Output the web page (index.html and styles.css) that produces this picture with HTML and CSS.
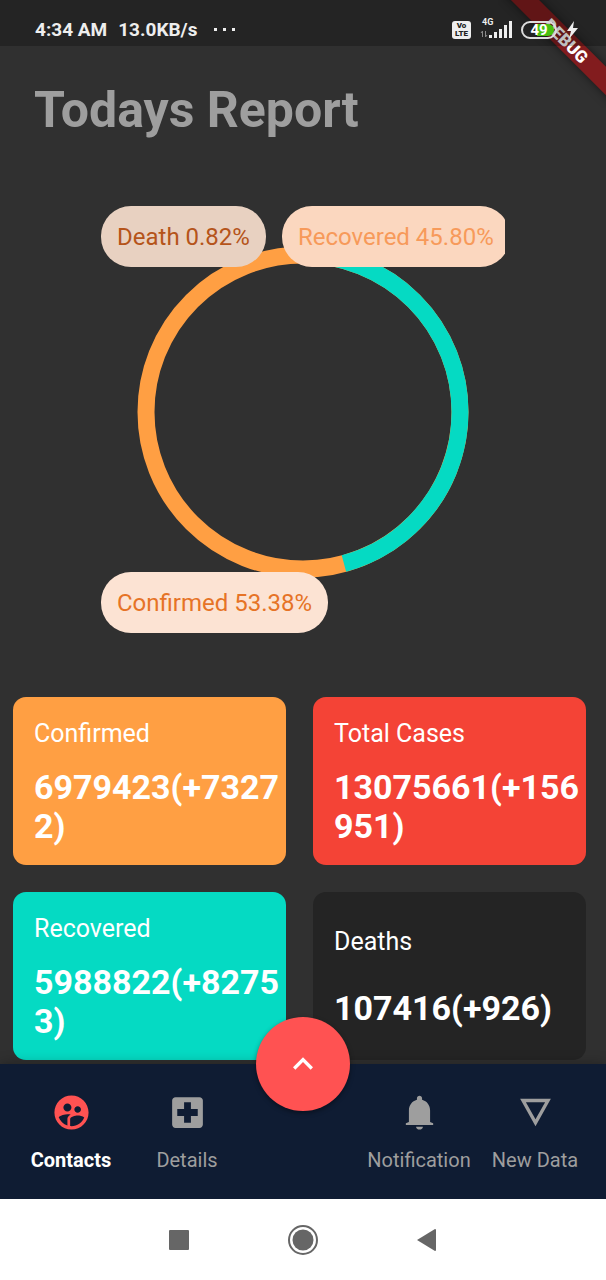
FILE: index.html
```html
<!DOCTYPE html>
<html lang="en">
<head>
<meta charset="utf-8">
<meta name="viewport" content="width=device-width, initial-scale=1">
<title>Todays Report</title>
<link rel="stylesheet" href="styles.css">
</head>
<body>
<div class="ribbon-corner"><span class="ribbon">DEBUG</span></div>

<header class="status">
  <span>4:34 AM</span>
  <span>13.0KB/s</span>
  <svg class="dots" width="22" height="4" viewBox="0 0 22 4" aria-hidden="true"><path fill="currentColor" d="M0 0h3v3H0zM9 0h3v3H9zM18 0h3v3h-3z"/></svg>
  <div class="status-icons">
    <span class="volte"><span>Vo</span><span>LTE</span></span>
    <span class="signal">
      <span class="network">4G</span>
      <svg width="32" height="17" viewBox="0 0 32 17" aria-hidden="true"><path stroke="#888" stroke-width="1" fill="none" d="M2.500 16V10M1 12l1.500-2M5.500 10v6M7 14l-1.500 2"/><path fill="#eee" d="M9 14h3v3H9zM14 11h3v6h-3zM19 8h3v9h-3zM24 4h3v13h-3zM29 0h3v17h-3z"/></svg>
    </span>
    <span class="battery"><span class="battery-level">49</span></span>
    <svg width="13" height="18" viewBox="0 0 13 18" aria-hidden="true"><path fill="#eee" d="M8 0 1 10h4l-2 8 9-11H7z"/></svg>
  </div>
</header>

<main class="content">
  <h1 class="title">Todays Report</h1>

  <section class="chart" aria-label="Share of cases">
    <svg class="ring" viewBox="0 0 332 332" aria-hidden="true">
      <g fill="none" stroke-width="17" transform="rotate(-90 166 166)">
        <circle cx="166" cy="166" r="157" pathLength="100" stroke="#ff9f43"/>
        <circle cx="166" cy="166" r="157" pathLength="100" stroke="#05dac3" stroke-dasharray="45.8 54.2"/>
      </g>
    </svg>
    <div class="legend">
      <div class="legend-row">
        <span class="pill pill-death">Death 0.82%</span>
        <span class="pill pill-recovered">Recovered 45.80%</span>
      </div>
      <div class="legend-row">
        <span class="pill pill-confirmed">Confirmed 53.38%</span>
      </div>
    </div>
  </section>

  <section class="cards" aria-label="Totals">
    <article class="card card-confirmed"><h2 class="card-label">Confirmed</h2><p class="card-value">6979423(+73272)</p></article>
    <article class="card card-total"><h2 class="card-label">Total Cases</h2><p class="card-value">13075661(+156951)</p></article>
    <article class="card card-recovered"><h2 class="card-label">Recovered</h2><p class="card-value">5988822(+82753)</p></article>
    <article class="card card-deaths"><h2 class="card-label">Deaths</h2><p class="card-value">107416(+926)</p></article>
  </section>
</main>

<nav class="tabs" aria-label="Main">
  <button class="tab tab-active" type="button">
    <svg class="tab-icon" viewBox="0 0 24 24" aria-hidden="true"><path fill="currentColor" d="M12 2C6.480 2 2 6.480 2 12s4.480 10 10 10 10-4.480 10-10S17.520 2 12 2zm3.610 6.340c1.070 0 1.930.86 1.930 1.930s-.86 1.930-1.930 1.930-1.930-.86-1.930-1.930c-.01-1.070.86-1.930 1.930-1.930zm-6-1.580c1.300 0 2.360 1.060 2.360 2.360s-1.060 2.360-2.360 2.360-2.360-1.060-2.360-2.360c0-1.310 1.050-2.360 2.360-2.360zm0 9.130v3.750c-2.400-.75-4.300-2.600-5.140-4.960 1.050-1.120 3.670-1.690 5.140-1.690.53 0 1.200.08 1.900.22-1.640.87-1.900 2.020-1.900 2.680zM12 20c-.27 0-.53-.01-.79-.04v-4.070c0-1.420 2.940-2.130 4.400-2.130 1.070 0 2.920.39 3.840 1.150C18.280 17.880 15.390 20 12 20z"/></svg>
    <span>Contacts</span>
  </button>
  <button class="tab" type="button">
    <svg class="tab-icon" viewBox="0 0 24 24" aria-hidden="true"><path fill="currentColor" d="M19 3H5c-1.100 0-1.990.9-1.990 2L3 19c0 1.100.9 2 2 2h14c1.100 0 2-.9 2-2V5c0-1.100-.9-2-2-2zm-1 11h-4v4h-4v-4H6v-4h4V6h4v4h4v4z"/></svg>
    <span>Details</span>
  </button>
  <div class="fab-slot">
    <button class="fab" type="button" aria-label="Expand">
      <svg width="40" height="40" viewBox="0 0 24 24" aria-hidden="true"><path fill="#fff" d="M12 8l-6 6 1.410 1.410L12 10.830l4.590 4.580L18 14z"/></svg>
    </button>
  </div>
  <button class="tab" type="button">
    <svg class="tab-icon" viewBox="0 0 24 24" aria-hidden="true"><path fill="currentColor" d="M12 22c1.100 0 2-.7 2-1.700h-4c0 1 .9 1.700 2 1.700zM18.200 17.500V10.800c0-3.100-1.800-5.500-4.700-6.300v-.8c0-.9-.7-1.500-1.500-1.500s-1.500.6-1.500 1.500v.8c-2.900.8-4.700 3.200-4.700 6.300v6.700L4 18.300v1h16v-1z"/></svg>
    <span>Notification</span>
  </button>
  <button class="tab" type="button">
    <svg class="tab-icon" viewBox="0 0 24 24" aria-hidden="true"><path fill="currentColor" d="M3 4l9 16 9-16H3zm3.380 2h11.250L12 16 6.380 6z"/></svg>
    <span>New Data</span>
  </button>
</nav>

<footer class="system">
  <button class="system-key" type="button" aria-label="Recent apps"><svg width="20" height="20" viewBox="0 0 20 20"><rect width="20" height="20" rx="1" fill="#666"/></svg></button>
  <button class="system-key" type="button" aria-label="Home"><svg width="30" height="30" viewBox="0 0 30 30"><circle cx="15" cy="15" r="14" fill="none" stroke="#666" stroke-width="2"/><circle cx="15" cy="15" r="10.500" fill="#666"/></svg></button>
  <button class="system-key" type="button" aria-label="Back"><svg width="20" height="22" viewBox="0 0 20 22"><path d="M0 11 18 0Q19 0 19 1V21Q19 22 18 22z" fill="#666"/></svg></button>
</footer>
</body>
</html>
```

FILE: styles.css
```css
* {
  box-sizing: border-box;
}

body {
  position: relative;
  display: flex;
  flex-direction: column;
  min-height: 100vh;
  margin: 0;
  overflow-x: hidden;
  background: #303030;
  color: #fff;
  font-family: Roboto, "Liberation Sans", sans-serif;
}

h1,
h2,
p {
  margin: 0;
}

button {
  padding: 0;
  border: 0;
  background: none;
  color: inherit;
  font: inherit;
}

svg {
  display: block;
}

/* Debug ribbon */
.ribbon-corner {
  position: absolute;
  top: 0;
  right: 0;
  width: 108px;
  height: 108px;
  overflow: hidden;
}

.ribbon {
  position: absolute;
  top: 31px;
  left: -12px;
  width: 160px;
  transform: rotate(45deg);
  background: #821c1e;
  box-shadow: 0 0 10px rgba(0, 0, 0, 0.5);
  font-size: 17px;
  font-weight: 900;
  line-height: 20px;
  text-align: center;
}

/* Status bar */
.status {
  position: relative;
  display: flex;
  align-items: center;
  gap: 11px;
  height: 46px;
  padding: 13px 27px 0 35px;
  background: rgba(0, 0, 0, 0.25);
  color: #eee;
  font-size: 19px;
  font-weight: 700;
}

.dots {
  margin-left: 6px;
}

.status-icons {
  display: flex;
  align-items: center;
  gap: 9px;
  margin-left: auto;
}

.volte {
  display: flex;
  flex-direction: column;
  align-items: center;
  width: 19px;
  padding: 1px 0;
  border-radius: 3px;
  background: #eee;
  color: #222;
  font-size: 8px;
  font-weight: 900;
  line-height: 8px;
}

.signal {
  display: grid;
}

.signal > * {
  grid-area: 1 / 1;
}

.network {
  align-self: start;
  margin-top: -3px;
  padding-left: 2px;
  font-size: 9px;
  line-height: 8px;
}

.battery {
  width: 36px;
  padding: 1px;
  border: 2px solid #ddd;
  border-radius: 9px;
}

.battery-level {
  display: block;
  border-radius: 6px;
  background: linear-gradient(90deg, transparent 45%, #48c010 45%);
  color: #fff;
  font-size: 15px;
  line-height: 12px;
  text-align: center;
}

/* Report */
.content {
  flex: 1;
  padding-bottom: 3px;
}

.title {
  padding: 35px 34px 66px;
  color: #9e9e9e;
  font-size: 50px;
  font-weight: 700;
  line-height: 59px;
}

.chart {
  display: grid;
  justify-items: center;
  width: 404px;
  max-width: 100%;
  margin: 0 auto 64px;
}

.chart > * {
  grid-area: 1 / 1;
}

.ring {
  width: 332px;
  margin-top: 40px;
}

.legend {
  position: relative;
  display: flex;
  flex-direction: column;
  justify-content: space-between;
  width: 100%;
  height: 427px;
  overflow: hidden;
}

.legend-row {
  display: flex;
  gap: 16px;
}

.pill {
  flex: none;
  padding: 17px 16px 16px;
  border-radius: 30px;
  font-size: 24px;
  line-height: 28px;
  white-space: nowrap;
}

.pill-death {
  background: #e8d1c1;
  color: #b5541a;
}

.pill-recovered {
  background: #fbd7bf;
  color: #f79a5a;
}

.pill-confirmed {
  background: #fce3d3;
  color: #e67326;
}

/* Totals */
.cards {
  display: grid;
  grid-template-columns: 1fr 1fr;
  gap: 27px;
  padding: 0 20px 0 13px;
}

.card {
  display: flex;
  flex-direction: column;
  justify-content: space-evenly;
  min-height: 168px;
  padding: 3px 4px 0 21px;
  border-radius: 13px;
}

.card-label {
  font-size: 25px;
  font-weight: 400;
  line-height: 30px;
}

.card-value {
  font-size: 34px;
  font-weight: 700;
  line-height: 39px;
  word-break: break-all;
}

.card-confirmed {
  background: #ff9f43;
}

.card-total {
  background: #f44336;
}

.card-recovered {
  background: #05dac3;
}

.card-deaths {
  background: #242424;
}

/* Tab bar */
.tabs {
  position: relative;
  display: grid;
  grid-template-columns: repeat(5, 1fr);
  height: 135px;
  padding: 0 13px;
  background: #0f1c33;
  box-shadow: 0 0 12px rgba(0, 0, 0, 0.3);
}

.tab {
  display: flex;
  flex-direction: column;
  align-items: center;
  justify-content: center;
  gap: 15px;
  color: #9e9e9e;
  font-size: 20px;
  line-height: 24px;
  white-space: nowrap;
}

.tab-icon {
  width: 41px;
  height: 41px;
}

.tab-active {
  color: #fff;
  font-weight: 700;
}

.tab-active .tab-icon {
  color: #ff5252;
}

.fab-slot {
  display: flex;
  align-items: flex-start;
  justify-content: center;
}

.fab {
  display: grid;
  place-items: center;
  flex: none;
  width: 94px;
  height: 94px;
  margin-top: -47px;
  border-radius: 50%;
  background: #ff5252;
  box-shadow: 0 2px 5px rgba(0, 0, 0, 0.4);
}

/* System keys */
.system {
  position: relative;
  display: flex;
  align-items: center;
  justify-content: center;
  height: 81px;
  background: #fff;
}

.system-key {
  display: grid;
  place-items: center;
  width: 124px;
  height: 48px;
}
```
